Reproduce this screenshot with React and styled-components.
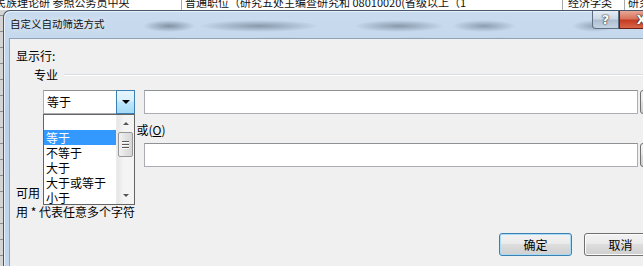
import styled, { createGlobalStyle } from "styled-components";

const GlobalStyle = createGlobalStyle`
  html, body {
    margin: 0;
    padding: 0;
  }
  body {
    width: 643px;
    height: 266px;
    overflow: hidden;
    background: repeating-linear-gradient(180deg, #d4d4d4 0 15px, #8d8d8d 15px 16px);
    font-family: "Noto Sans CJK SC", "Microsoft YaHei", sans-serif;
    font-size: 12px;
    color: #000;
  }
`;

// blurred sheet text seen through the glass frame
const blobs = [
  [165, 15, 26, 6, 0.5],
  [255, 15, 60, 6, 0.45],
  [395, 15, 45, 6, 0.45],
  [480, 15, 32, 6, 0.42],
  [590, 15, 22, 6, 0.36],
  [165, 32, 26, 6, 0.45],
  [275, 32, 75, 6, 0.42],
  [410, 32, 45, 6, 0.42],
  [495, 32, 28, 6, 0.38],
  [590, 32, 20, 6, 0.32],
]
  .map(
    ([x, y, w, h, a]) =>
      `radial-gradient(ellipse ${w}px ${h}px at ${x}px ${y}px, rgba(60,75,92,${a}), transparent)`
  )
  .join(", ");

const Sheet = styled.div`
  display: flex;
  flex-direction: column;
  height: 266px;
`;

const SheetStrip = styled.div`
  height: 10px;
  flex: none;
  display: flex;
  overflow: hidden;
  background: #fff;
`;

const Cell = styled.div`
  flex: none;
  width: ${(p) => p.$w}px;
  height: 16px;
  margin-top: -6px;
  padding-left: ${(p) => p.$pad ?? 3}px;
  box-sizing: border-box;
  border-right: 1px solid #a8a8a8;
  white-space: nowrap;
  overflow: hidden;
  font-size: 11px;
  line-height: 16px;
  text-indent: ${(p) => p.$indent ?? 0}px;
  color: #111;
`;

const Window = styled.div`
  margin-left: 3px;
  width: 677px;
  flex: 1;
  display: flex;
  flex-direction: column;
  border: 1px solid #44576c;
  border-right: none;
  border-bottom: none;
  border-radius: 7px 0 0 0;
  background: ${blobs}, linear-gradient(180deg, #c9dbee 0%, #bad0e9 40%, #c3d7ed 100%);
  box-shadow: inset 1px 1px 0 rgba(255, 255, 255, 0.6);
`;

const TitleBar = styled.div`
  height: 27px;
  flex: none;
  display: flex;
  align-items: flex-start;
`;

const Title = styled.div`
  padding: 6px 0 0 6px;
  font-size: 10.5px;
  line-height: 14px;
  color: #111;
  text-shadow: 0 0 6px rgba(255, 255, 255, 0.9);
`;

const CaptionButtons = styled.div`
  margin-left: auto;
  margin-right: 17px;
  display: flex;
`;

const CaptionButton = styled.div`
  width: ${(p) => p.$w}px;
  height: 18px;
  box-sizing: border-box;
  display: flex;
  align-items: center;
  justify-content: center;
  font-family: "DejaVu Sans", sans-serif;
  font-weight: bold;
  color: #fff;
  border: 1px solid ${(p) => (p.$close ? "#6b1f14" : "#5f6f82")};
  border-top: none;
  border-radius: ${(p) => (p.$close ? "0 0 4px 0" : "0 0 0 4px")};
  background: ${(p) =>
    p.$close
      ? "linear-gradient(180deg, #e8a796 0%, #d9735c 45%, #c43c22 55%, #d9654a 100%)"
      : "linear-gradient(180deg, #e6edf5 0%, #cbd8e6 45%, #aebfd2 55%, #c5d4e3 100%)"};
  font-size: ${(p) => (p.$close ? 12 : 13)}px;
  text-shadow: 0 0 2px #222, 0 0 1px #222;
`;

const Client = styled.div`
  flex: 1;
  margin: 0 5px;
  padding: 10px 10px 0 6px;
  display: flex;
  flex-direction: column;
  background: #f0f0f0;
  border: 1px solid #8fa3b9;
  border-right: none;
  border-bottom: none;
`;

const Label = styled.div`
  line-height: 14px;
  margin-top: ${(p) => p.$top ?? 0}px;
  white-space: pre;
`;

const Group = styled.div`
  margin-top: 5px;
  padding-left: 18px;
  display: flex;
  align-items: center;
  line-height: 14px;
`;

const GroupLine = styled.div`
  flex: 1;
  margin-left: 6px;
  height: 0;
  border-top: 1px solid #d5dfe5;
  border-bottom: 1px solid #fff;
`;

const CondRow = styled.div`
  margin-top: ${(p) => p.$top}px;
  padding-left: 27px;
  height: 24px;
  display: flex;
  gap: 9px;
`;

const ComboWrap = styled.div`
  position: relative;
  width: 92px;
  flex: none;
`;

const Combo = styled.div`
  height: 24px;
  box-sizing: border-box;
  display: flex;
  border: 1px solid #abadb3;
  border-top-color: #8f9295;
  background: #fff;
`;

const ComboText = styled.div`
  flex: 1;
  padding-left: 3px;
  line-height: 22px;
`;

const DropButton = styled.div`
  width: 17px;
  margin: -1px -1px -1px 0;
  display: flex;
  align-items: center;
  justify-content: center;
  border: 1px solid ${(p) => (p.$hot ? "#3c7fb1" : "#dcdcdc")};
  background: ${(p) =>
    p.$hot
      ? "linear-gradient(180deg, #e6f5fd 0%, #d9f0fc 45%, #bee6fd 50%, #a7d9f5 100%)"
      : "linear-gradient(180deg, #f2f2f2 0%, #ebebeb 45%, #dddddd 50%, #cfcfcf 100%)"};
`;

const Arrow = styled.div`
  width: 0;
  height: 0;
  border-left: ${(p) => p.$size}px solid transparent;
  border-right: ${(p) => p.$size}px solid transparent;
  ${(p) =>
    p.$up
      ? `border-bottom: ${p.$size}px solid ${p.$color};`
      : `border-top: ${p.$size}px solid ${p.$color};`}
`;

const TextInput = styled.div`
  flex: 1;
  box-sizing: border-box;
  border: 1px solid #abadb3;
  border-top-color: #8f9295;
  background: #fff;
`;

const SideButton = styled.div`
  width: 26px;
  margin-left: -7px;
  box-sizing: border-box;
  border: 1px solid #707070;
  border-radius: 3px;
  background: linear-gradient(180deg, #f2f2f2 0%, #ebebeb 45%, #dddddd 50%, #cfcfcf 100%);
`;

const DropList = styled.div`
  position: absolute;
  top: 24px;
  left: 0;
  width: 92px;
  height: 91px;
  box-sizing: border-box;
  display: flex;
  border: 1px solid #646464;
  background: #fff;
  z-index: 5;
`;

const Items = styled.div`
  flex: 1;
  display: flex;
  flex-direction: column;
`;

const Item = styled.div`
  height: 15px;
  flex: none;
  padding-left: 2px;
  line-height: 15px;
  white-space: nowrap;
  background: ${(p) => (p.$selected ? "#3399ff" : "transparent")};
  color: ${(p) => (p.$selected ? "#fff" : "#000")};
`;

const ScrollBar = styled.div`
  width: 17px;
  flex: none;
  display: flex;
  flex-direction: column;
  align-items: center;
  background: linear-gradient(90deg, #e6e6e6, #f4f4f4 40%, #f4f4f4);
  border-left: 1px solid #ececec;
`;

const ScrollArrow = styled.div`
  height: 17px;
  display: flex;
  align-items: center;
  justify-content: center;
`;

const Thumb = styled.div`
  width: 15px;
  height: 25px;
  box-sizing: border-box;
  display: flex;
  flex-direction: column;
  align-items: center;
  justify-content: center;
  gap: 2px;
  border: 1px solid #979797;
  border-radius: 2px;
  background: linear-gradient(90deg, #f2f2f2, #e2e2e2 50%, #d6d6d6);
`;

const Grip = styled.div`
  width: 7px;
  height: 1px;
  background: #5a5a5a;
  box-shadow: 0 1px 0 #fff;
`;

const Track = styled.div`
  flex: 1;
`;

const RadioRow = styled.div`
  margin-top: 8px;
  padding-left: 47px;
  height: 16px;
  display: flex;
  gap: 12px;
`;

const Radio = styled.label`
  display: flex;
  align-items: center;
  gap: 4px;
  line-height: 16px;

  u {
    text-decoration: underline;
    text-underline-offset: 1px;
  }
`;

const RadioDot = styled.span`
  width: 11px;
  height: 11px;
  border: 1px solid #8e8f8f;
  border-radius: 50%;
  background: #f4f4f4;
`;

const ButtonRow = styled.div`
  margin-top: 14px;
  display: flex;
  justify-content: flex-end;
  gap: 12px;
  padding-right: 9px;
`;

const Button = styled.div`
  width: 73px;
  height: 23px;
  box-sizing: border-box;
  display: flex;
  align-items: center;
  justify-content: center;
  border: 1px solid ${(p) => (p.$default ? "#3c7fb1" : "#707070")};
  border-radius: 3px;
  background: linear-gradient(180deg, #f2f2f2 0%, #ebebeb 45%, #dddddd 50%, #cfcfcf 100%);
  box-shadow: ${(p) => (p.$default ? "inset 0 0 0 1px #a8dcf6" : "inset 0 0 0 1px #fcfcfc")};
`;

const options = ["", "等于", "不等于", "大于", "大于或等于", "小于"];

export default function App() {
  return (
    <>
      <GlobalStyle />
      <Sheet>
        <SheetStrip>
          <Cell $w={182} $pad={0} $indent={-5}>
            民族理论研 参照公务员中央
          </Cell>
          <Cell $w={381}>普通职位（研究五处主编查研究和 08010020(省级以上（1</Cell>
          <Cell $w={62} $pad={5}>
            经济学类
          </Cell>
          <Cell $w={60}>研究</Cell>
        </SheetStrip>
        <Window>
          <TitleBar>
            <Title>自定义自动筛选方式</Title>
            <CaptionButtons>
              <CaptionButton $w={27}>?</CaptionButton>
              <CaptionButton $w={45} $close>
                X
              </CaptionButton>
            </CaptionButtons>
          </TitleBar>
          <Client>
            <Label>显示行:</Label>
            <Group>
              专业
              <GroupLine />
            </Group>
            <CondRow $top={8}>
              <ComboWrap>
                <Combo>
                  <ComboText>等于</ComboText>
                  <DropButton $hot>
                    <Arrow $size={4} $color="#000" />
                  </DropButton>
                </Combo>
                <DropList>
                  <Items>
                    {options.map((o, i) => (
                      <Item key={i} $selected={o === "等于"}>
                        {o}
                      </Item>
                    ))}
                  </Items>
                  <ScrollBar>
                    <ScrollArrow>
                      <Arrow $up $size={3} $color="#555" />
                    </ScrollArrow>
                    <Thumb>
                      <Grip />
                      <Grip />
                      <Grip />
                    </Thumb>
                    <Track />
                    <ScrollArrow>
                      <Arrow $size={3} $color="#555" />
                    </ScrollArrow>
                  </ScrollBar>
                </DropList>
              </ComboWrap>
              <TextInput />
              <SideButton />
            </CondRow>
            <RadioRow>
              <Radio>
                <RadioDot />
                <span>
                  与(<u>A</u>)
                </span>
              </Radio>
              <Radio>
                <RadioDot />
                <span>
                  或(<u>O</u>)
                </span>
              </Radio>
            </RadioRow>
            <CondRow $top={5}>
              <ComboWrap>
                <Combo>
                  <ComboText />
                  <DropButton>
                    <Arrow $size={4} $color="#000" />
                  </DropButton>
                </Combo>
              </ComboWrap>
              <TextInput />
              <SideButton />
            </CondRow>
            <Label $top={19}>可用 ? 代表单个字符</Label>
            <Label $top={5}>用 * 代表任意多个字符</Label>
            <ButtonRow>
              <Button $default>确定</Button>
              <Button>取消</Button>
            </ButtonRow>
          </Client>
        </Window>
      </Sheet>
    </>
  );
}
